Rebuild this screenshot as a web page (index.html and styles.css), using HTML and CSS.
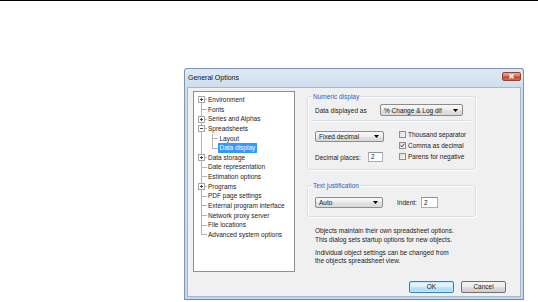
FILE: index.html
```html
<!DOCTYPE html>
<html>
<head>
<meta charset="utf-8">
<title>General Options</title>
<link rel="stylesheet" href="styles.css">
</head>
<body>
<div class="topline"></div>
<div class="desk">
  <div class="window">
    <div class="titlebar">
      <span class="title">General Options</span>
      <span class="close"><svg width="19" height="9" viewBox="0 0 19 9"><path d="M7.5 2.2 L11.5 6.3 M11.5 2.2 L7.5 6.3" stroke="#fff" stroke-width="1.6" fill="none"/></svg></span>
    </div>
    <div class="client">
      <div class="main">
        <div class="tree">
          <div class="row"><span class="g1 first"><span class="exp plus"></span></span><span class="lbl">Environment</span></div>
          <div class="row"><span class="g1 dash"></span><span class="lbl">Fonts</span></div>
          <div class="row"><span class="g1"><span class="exp plus"></span></span><span class="lbl">Series and Alphas</span></div>
          <div class="row"><span class="g1"><span class="exp minus"></span></span><span class="lbl">Spreadsheets</span></div>
          <div class="row"><span class="g1 through"></span><span class="g2 mid"></span><span class="lbl child">Layout</span></div>
          <div class="row"><span class="g1 through"></span><span class="g2 last"></span><span class="lbl child sel">Data display</span></div>
          <div class="row"><span class="g1"><span class="exp plus"></span></span><span class="lbl">Data storage</span></div>
          <div class="row"><span class="g1 dash"></span><span class="lbl">Date representation</span></div>
          <div class="row"><span class="g1 dash"></span><span class="lbl">Estimation options</span></div>
          <div class="row"><span class="g1"><span class="exp plus"></span></span><span class="lbl">Programs</span></div>
          <div class="row"><span class="g1 dash"></span><span class="lbl">PDF page settings</span></div>
          <div class="row"><span class="g1 dash"></span><span class="lbl">External program interface</span></div>
          <div class="row"><span class="g1 dash"></span><span class="lbl">Network proxy server</span></div>
          <div class="row"><span class="g1 dash"></span><span class="lbl">File locations</span></div>
          <div class="row"><span class="g1 dash lastroot"></span><span class="lbl">Advanced system options</span></div>
        </div>
        <div class="right">
          <div class="group group-num">
            <span class="group-title">Numeric display</span>
            <div class="row-display">
              <span class="field-label">Data displayed as</span>
              <span class="combo combo-wide"><span>% Change &amp; Log dif</span><svg width="5" height="3" viewBox="0 0 5 3"><path d="M0 0 H5 L2.5 3 Z" fill="#000"/></svg></span>
            </div>
            <div class="separator"></div>
            <div class="row-format">
              <div class="format-left">
                <span class="combo combo-fixed"><span>Fixed decimal</span><svg width="5" height="3" viewBox="0 0 5 3"><path d="M0 0 H5 L2.5 3 Z" fill="#000"/></svg></span>
                <div class="places">
                  <span class="places-label">Decimal places:</span>
                  <span class="input input-places">2</span>
                </div>
              </div>
              <div class="checks">
                <div class="check"><span class="box"></span><span>Thousand separator</span></div>
                <div class="check"><span class="box checked"><svg width="5" height="5" viewBox="0 0 5 5"><path d="M0.6 2.4 L1.9 3.9 L4.4 0.7" stroke="#2b3f78" stroke-width="1" fill="none"/></svg></span><span>Comma as decimal</span></div>
                <div class="check"><span class="box"></span><span>Parens for negative</span></div>
              </div>
            </div>
          </div>
          <div class="group group-just">
            <span class="group-title">Text justification</span>
            <div class="row-just">
              <span class="combo combo-auto"><span>Auto</span><svg width="5" height="3" viewBox="0 0 5 3"><path d="M0 0 H5 L2.5 3 Z" fill="#000"/></svg></span>
              <span class="indent-label">Indent:</span>
              <span class="input input-indent">2</span>
            </div>
          </div>
          <p class="note">Objects maintain their own spreadsheet options.<br>This dialog sets startup options for new objects.</p>
          <p class="note note2">Individual object settings can be changed from<br>the objects spreadsheet view.</p>
        </div>
      </div>
      <div class="footer">
        <span class="btn btn-default">OK</span>
        <span class="btn">Cancel</span>
      </div>
    </div>
  </div>
</div>
</body>
</html>
```
FILE: styles.css
```css
html, body {
  margin: 0;
  padding: 0;
  background: #ffffff;
}
body {
  width: 538px;
  height: 302px;
  overflow: hidden;
  font-family: "Liberation Sans", Arial, sans-serif;
  font-size: 6.5px;
  color: #222;
}
.topline {
  height: 1px;
  background: #000;
}
.desk {
  padding: 67px 0 0 184px;
}
.window {
  box-sizing: border-box;
  width: 340px;
  height: 232px;
  border: 1px solid #8097b4;
  border-bottom-color: #5f8fb3;
  border-radius: 3px 3px 0 0;
  background: linear-gradient(to bottom, #dde9f6 0, #cfdeee 18px, #c3d6eb 100%);
  padding: 0 2px 2px 2px;
  display: flex;
  flex-direction: column;
}
.titlebar {
  height: 18px;
  display: flex;
  align-items: flex-start;
  justify-content: space-between;
}
.title {
  font-size: 7px;
  line-height: 18px;
  padding-left: 1px;
  color: #111;
}
.close {
  margin-top: 3px;
  width: 19px;
  height: 9px;
  box-sizing: border-box;
  border: 1px solid #8f4434;
  border-radius: 2px;
  background: linear-gradient(to bottom, #e8a896 0, #d7775f 45%, #c5442b 55%, #d46a50 100%);
  display: flex;
}
.close svg {
  display: block;
  margin: -1px;
}
.client {
  flex: 1;
  box-sizing: border-box;
  background: #f0f0f0;
  border: 1px solid #a3b8d0;
  display: flex;
  flex-direction: column;
}
.main {
  display: flex;
  padding: 3px 0 0 5px;
  gap: 12px;
  height: 181px;
}
.tree {
  box-sizing: border-box;
  width: 102px;
  height: 181px;
  background: #fff;
  border: 1px solid #8a8f98;
  padding-top: 3px;
}
.row {
  display: flex;
  height: 9.65px;
  line-height: 9.65px;
  white-space: nowrap;
}
.g1, .g2 {
  flex: none;
  height: 100%;
  display: flex;
  align-items: center;
  background-repeat: no-repeat;
}
.g1 {
  width: 13px;
  background-image: linear-gradient(#b4b4b4, #b4b4b4), linear-gradient(#b4b4b4, #b4b4b4);
  background-size: 1px 100%, 6px 1px;
  background-position: 7px 0, 7px 50%;
}
.g1.first {
  background-size: 1px 50%, 6px 1px;
  background-position: 7px 100%, 7px 50%;
}
.g1.lastroot {
  background-size: 1px 50%, 6px 1px;
  background-position: 7px 0, 7px 50%;
}
.g1.through {
  background-image: linear-gradient(#b4b4b4, #b4b4b4);
  background-size: 1px 100%;
  background-position: 7px 0;
}
.g2 {
  width: 11px;
  background-image: linear-gradient(#b4b4b4, #b4b4b4), linear-gradient(#b4b4b4, #b4b4b4);
  background-size: 1px 100%, 6px 1px;
  background-position: 5px 0, 5px 50%;
}
.g2.last {
  background-size: 1px 50%, 6px 1px;
  background-position: 5px 0, 5px 50%;
}
.exp {
  display: block;
  box-sizing: border-box;
  width: 7px;
  height: 7px;
  margin-left: 4px;
  border: 1px solid #a6a6a6;
  background-color: #fff;
  background-repeat: no-repeat;
}
.exp.plus {
  background-image: linear-gradient(#444, #444), linear-gradient(#444, #444);
  background-size: 3px 1px, 1px 3px;
  background-position: 1px 2px, 2px 1px;
}
.exp.minus {
  background-image: linear-gradient(#444, #444);
  background-size: 3px 1px;
  background-position: 1px 2px;
}
.lbl {
  padding: 0 1px;
}
.lbl.child {
  padding: 0 1.5px;
}
.lbl.sel {
  background: #3399ff;
  color: #fff;
}
.right {
  width: 169px;
  display: flex;
  flex-direction: column;
}
.group {
  box-sizing: border-box;
  border: 1px solid #d5dfe5;
  border-radius: 3px;
  box-shadow: inset 1px 1px 0 #fff, 1px 1px 0 #fff;
  padding: 0 4px 7px 7px;
}
.group-title {
  display: block;
  width: max-content;
  margin: -4px 0 0 -3px;
  padding: 0 1px;
  background: #f0f0f0;
  line-height: 8px;
  color: #2a5fc8;
}
.group-num {
  margin-top: 5px;
}
.row-display {
  margin-top: 3px;
  display: flex;
  align-items: center;
  height: 12px;
}
.field-label {
  width: 65px;
  flex: none;
}
.combo {
  box-sizing: border-box;
  display: flex;
  align-items: center;
  justify-content: space-between;
  border: 1px solid #8c8c8c;
  border-radius: 2px;
  background: linear-gradient(to bottom, #f8f8f8 0, #eeeeee 50%, #e2e2e2 50%, #d9d9d9 100%);
  padding: 0 4px 0 3px;
  white-space: nowrap;
  line-height: 9px;
}
.combo svg {
  display: block;
  flex: none;
}
.combo-wide {
  width: 83px;
  height: 12px;
}
.separator {
  height: 1px;
  margin: 4px 0 8px -3px;
  background: #d5dfe5;
  box-shadow: 0 1px 0 #fff;
}
.row-format {
  display: flex;
  gap: 14px;
}
.format-left {
  width: 70px;
  flex: none;
  display: flex;
  flex-direction: column;
}
.combo-fixed {
  margin-top: 2px;
  width: 69px;
  height: 11px;
}
.places {
  margin-top: 10px;
  display: flex;
  align-items: center;
  height: 10px;
}
.places-label {
  width: 53px;
  flex: none;
}
.input {
  box-sizing: border-box;
  display: block;
  background: #fff;
  border: 1px solid #abadb3;
  border-top-color: #8e9198;
  padding-left: 2px;
  line-height: 8px;
}
.input-places {
  width: 15px;
  height: 10px;
}
.checks {
  display: flex;
  flex-direction: column;
}
.check {
  height: 11px;
  display: flex;
  align-items: center;
  gap: 2px;
  white-space: nowrap;
}
.box {
  box-sizing: border-box;
  width: 7px;
  height: 7px;
  flex: none;
  border: 1px solid #8e8f8f;
  background: linear-gradient(135deg, #dedede, #f8f8f8);
  display: flex;
  align-items: center;
  justify-content: center;
}
.box svg {
  display: block;
}
.group-just {
  margin-top: 15px;
  padding-bottom: 8px;
}
.row-just {
  margin-top: 7px;
  display: flex;
  align-items: center;
  height: 11px;
}
.combo-auto {
  width: 68px;
  height: 11px;
}
.indent-label {
  margin-left: 14px;
  width: 24px;
}
.input-indent {
  width: 17px;
  height: 11px;
  line-height: 9px;
}
.note {
  margin: 10px 0 0 0;
  padding-left: 8px;
  line-height: 8.5px;
  white-space: nowrap;
  color: #222;
}
.note2 {
  margin-top: 4.5px;
}
.footer {
  display: flex;
  justify-content: flex-end;
  gap: 7px;
  margin-top: 9px;
  padding-right: 14px;
}
.btn {
  box-sizing: border-box;
  width: 45px;
  height: 12px;
  border: 1px solid #707070;
  border-radius: 2px;
  background: linear-gradient(to bottom, #f4f4f4 0, #ebebeb 50%, #dddddd 50%, #cfcfcf 100%);
  display: flex;
  align-items: center;
  justify-content: center;
  line-height: 10px;
}
.btn-default {
  border-color: #3c7fb1;
  background: linear-gradient(to bottom, #eaf6fd 0, #d9f0fc 50%, #bee6fd 50%, #a7d9f5 100%);
  box-shadow: inset 0 0 0 1px #bfe6fb;
}
```
